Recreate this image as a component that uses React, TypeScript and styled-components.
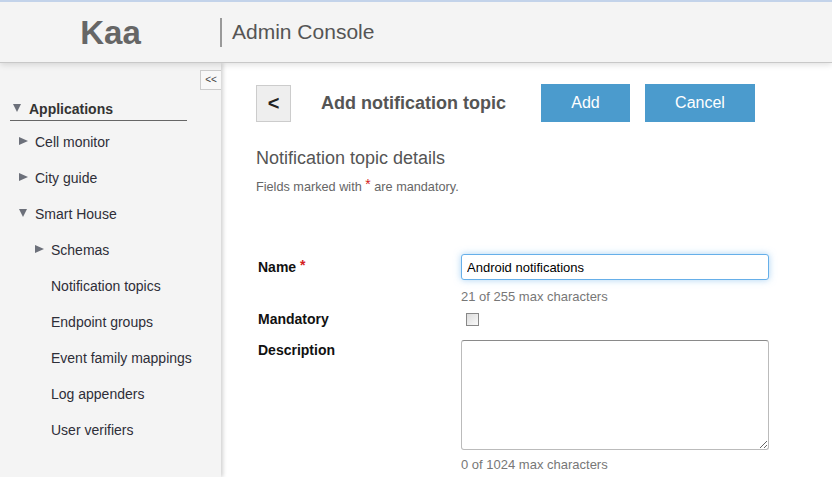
import * as React from 'react';
import styled, { createGlobalStyle } from 'styled-components';

const GlobalStyle = createGlobalStyle`
    html, body {
        margin: 0;
        padding: 0;
        background: #fff;
        font-family: "Liberation Sans", Arial, sans-serif;
    }
    * { box-sizing: border-box; }
`

const Page = styled.div`
    width: 832px;
    height: 477px;
    overflow: hidden;
    display: flex;
    flex-direction: column;
    border-top: 2px solid #c3d3ea;
`
const Header = styled.header`
    height: 61px;
    flex: none;
    display: flex;
    align-items: center;
    background: #f4f4f4;
    border-bottom: 1px solid #c8c8c8;
    box-shadow: 0 2px 6px rgba(0, 0, 0, 0.12);
    position: relative;
    z-index: 2;
`
const Logo = styled.div`
    width: 221px;
    text-align: center;
    font-size: 33px;
    font-weight: bold;
    color: #666;
    margin-top: 1px;
`
const Divider = styled.span`
    width: 2px;
    height: 29px;
    background: #999;
    margin-left: -1px;
`
const Product = styled.div`
    margin-left: 10px;
    font-size: 21px;
    color: #555;
`
const Body = styled.div`
    flex: 1;
    display: flex;
    min-height: 0;
`
const Sidebar = styled.nav`
    width: 221px;
    flex: none;
    background: #f4f4f4;
    box-shadow: 2px 0 4px rgba(0, 0, 0, 0.18);
    position: relative;
    z-index: 1;
`
const ToggleRow = styled.div`
    display: flex;
    justify-content: flex-end;
    margin-top: 7px;
`
const Toggle = styled.div`
    width: 21px;
    height: 20px;
    border: 1px solid #ccc;
    border-right: none;
    background: #f8f8f8;
    font-size: 10px;
    line-height: 18px;
    text-align: center;
    color: #444;
`
const TreeHeading = styled.div`
    margin: 8px 34px 0 10px;
    height: 23px;
    display: flex;
    align-items: center;
    padding-left: 3px;
    border-bottom: 1px solid #666;
    font-size: 14px;
    font-weight: bold;
    color: #333;
`
const Tree = styled.ul`
    list-style: none;
    margin: 3px 0 0;
    padding: 0;
`
const TreeItem = styled.li<{ $level: number }>`
    height: 36px;
    display: flex;
    align-items: center;
    padding-left: ${p => p.$level === 1 ? 19 : 35}px;
    font-size: 14px;
    color: #2e2e38;
`
const Caret = styled.span<{ $open?: boolean; $hidden?: boolean }>`
    width: 0;
    height: 0;
    margin-right: ${p => p.$open ? 8 : 7}px;
    margin-top: -3px;
    visibility: ${p => p.$hidden ? 'hidden' : 'visible'};
    ${p => p.$open
        ? `border-left: 4.5px solid transparent;
           border-right: 4.5px solid transparent;
           border-top: 8px solid #6c707a;`
        : `border-top: 4.5px solid transparent;
           border-bottom: 4.5px solid transparent;
           border-left: 9px solid #6c707a;`}
`
const Main = styled.main`
    flex: 1;
    padding: 21px 0 0 35px;
    background: #fff;
`
const Toolbar = styled.div`
    display: flex;
    align-items: center;
`
const BackButton = styled.div`
    width: 35px;
    height: 37px;
    background: #eee;
    border: 1px solid #ccc;
    display: flex;
    align-items: center;
    justify-content: center;
    font-size: 20px;
    font-weight: bold;
    color: #222;
`
const PageTitle = styled.h1`
    margin: 0 35px 0 30px;
    font-size: 18px;
    font-weight: bold;
    color: #555;
`
const ActionButton = styled.button<{ $width: number }>`
    width: ${p => p.$width}px;
    height: 38px;
    margin-right: 15px;
    background: #4b9bcd;
    border: none;
    color: #fff;
    font-family: inherit;
    font-size: 16px;
`
const SectionTitle = styled.h2`
    margin: 26px 0 0;
    font-size: 18px;
    font-weight: normal;
    line-height: 20px;
    color: #555;
`
const Note = styled.p`
    margin: 8px 0 0;
    font-size: 12.7px;
    line-height: 16px;
    color: #666;
`
const Star = styled.span`
    color: #d42020;
    font-size: 14px;
    vertical-align: 2px;
`
const Form = styled.div`
    margin-top: 59px;
    padding-left: 2px;
`
const Row = styled.div<{ $gap?: number }>`
    display: flex;
    align-items: flex-start;
    margin-top: ${p => p.$gap ?? 0}px;
`
const Label = styled.div`
    width: 203px;
    line-height: 22px;
    font-size: 14px;
    font-weight: bold;
    color: #111;
`
const Field = styled.div`
    width: 308px;
`
const TextInput = styled.input`
    width: 308px;
    height: 26px;
    padding: 0 5px;
    border: 1px solid #66afe9;
    border-radius: 3px;
    box-shadow: 0 0 7px rgba(102, 175, 233, 0.55);
    font-family: inherit;
    font-size: 13px;
    color: #000;
    outline: none;
`
const Hint = styled.div<{ $gap: number }>`
    margin-top: ${p => p.$gap}px;
    font-size: 13px;
    line-height: 16px;
    color: #777;
`
const Check = styled.input`
    appearance: none;
    width: 13px;
    height: 13px;
    margin: 5px 0 0 5px;
    border: 1px solid #888;
    background: linear-gradient(135deg, #dcdcdc, #fafafa);
`
const TextArea = styled.textarea`
    display: block;
    width: 308px;
    height: 110px;
    margin-top: 1px;
    border: 1px solid #bbb;
    border-top-color: #8a8a8a;
    border-radius: 3px;
    resize: vertical;
    font-family: inherit;
    outline: none;
`

const appItems = [
    { label: 'Cell monitor', level: 1, caret: 'closed' },
    { label: 'City guide', level: 1, caret: 'closed' },
    { label: 'Smart House', level: 1, caret: 'open' },
    { label: 'Schemas', level: 2, caret: 'closed' },
    { label: 'Notification topics', level: 2, caret: 'none' },
    { label: 'Endpoint groups', level: 2, caret: 'none' },
    { label: 'Event family mappings', level: 2, caret: 'none' },
    { label: 'Log appenders', level: 2, caret: 'none' },
    { label: 'User verifiers', level: 2, caret: 'none' },
]

export default function App() {
    const name = 'Android notifications'
    return (
        <Page>
            <GlobalStyle />
            <Header>
                <Logo>Kaa</Logo>
                <Divider />
                <Product>Admin Console</Product>
            </Header>
            <Body>
                <Sidebar>
                    <ToggleRow><Toggle>&lt;&lt;</Toggle></ToggleRow>
                    <TreeHeading><Caret $open />Applications</TreeHeading>
                    <Tree>
                        {appItems.map(item => (
                            <TreeItem key={item.label} $level={item.level}>
                                <Caret $open={item.caret === 'open'} $hidden={item.caret === 'none'} />
                                {item.label}
                            </TreeItem>
                        ))}
                    </Tree>
                </Sidebar>
                <Main>
                    <Toolbar>
                        <BackButton>&lt;</BackButton>
                        <PageTitle>Add notification topic</PageTitle>
                        <ActionButton $width={89}>Add</ActionButton>
                        <ActionButton $width={110}>Cancel</ActionButton>
                    </Toolbar>
                    <SectionTitle>Notification topic details</SectionTitle>
                    <Note>Fields marked with <Star>*</Star> are mandatory.</Note>
                    <Form>
                        <Row>
                            <Label>Name <Star>*</Star></Label>
                            <Field>
                                <TextInput defaultValue={name} />
                                <Hint $gap={9}>{name.length} of 255 max characters</Hint>
                            </Field>
                        </Row>
                        <Row $gap={3}>
                            <Label>Mandatory</Label>
                            <Check type="checkbox" />
                        </Row>
                        <Row $gap={9}>
                            <Label>Description</Label>
                            <Field>
                                <TextArea />
                                <Hint $gap={7}>0 of 1024 max characters</Hint>
                            </Field>
                        </Row>
                    </Form>
                </Main>
            </Body>
        </Page>
    )
}
